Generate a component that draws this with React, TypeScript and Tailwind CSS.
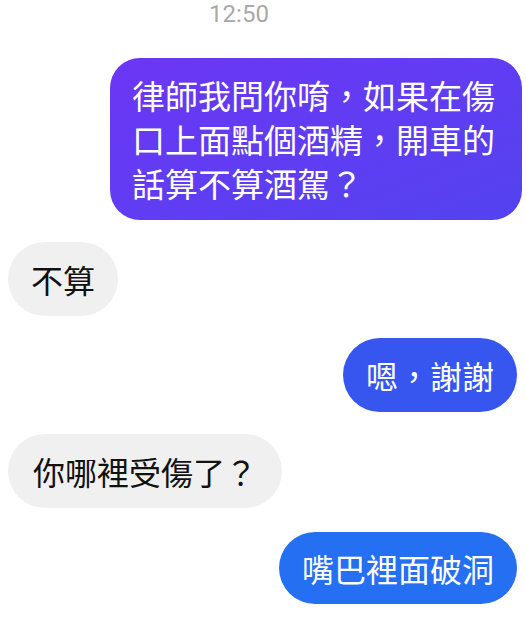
import React from "react";

const cjk = { fontFamily: '"Noto Sans CJK TC", "Noto Sans CJK SC", sans-serif' };

export default function App() {
  return (
    <div className="w-[526px] h-[640px] bg-white overflow-hidden flex flex-col">
      <div
        className="flex justify-center pr-[48px] text-[24px] leading-[28px] text-[#a9a9a9]"
        style={{ fontFamily: "Roboto, sans-serif" }}
      >
        12:50
      </div>
      <div className="flex flex-col mt-[30px]" style={cjk}>
        <div className="flex justify-end pr-[4px]">
          <div className="w-[412px] rounded-[30px] bg-gradient-to-br from-[#6c36f5] to-[#5342f0] text-white text-[33px] leading-[44px] pl-[22px] pr-[20px] py-[15px]">
            律師我問你唷，如果在傷口上面點個酒精，開車的話算不算酒駕？
          </div>
        </div>
        <div className="flex justify-start pl-[8px] mt-[22px]">
          <div className="rounded-full bg-[#f0f0f0] text-[#111] text-[32px] leading-[44px] px-[23px] py-[15px]">
            不算
          </div>
        </div>
        <div className="flex justify-end pr-[9px] mt-[22px]">
          <div className="rounded-full bg-[#3756ef] text-white text-[32px] leading-[44px] px-[23px] py-[15px]">
            嗯，謝謝
          </div>
        </div>
        <div className="flex justify-start pl-[8px] mt-[22px]">
          <div className="rounded-full bg-[#f0f0f0] text-[#111] text-[32px] leading-[44px] px-[25px] py-[15px]">
            你哪裡受傷了？
          </div>
        </div>
        <div className="flex justify-end pr-[9px] mt-[24px]">
          <div className="rounded-full bg-[#246ff2] text-white text-[32px] leading-[44px] px-[23px] py-[14px]">
            嘴巴裡面破洞
          </div>
        </div>
      </div>
    </div>
  );
}
